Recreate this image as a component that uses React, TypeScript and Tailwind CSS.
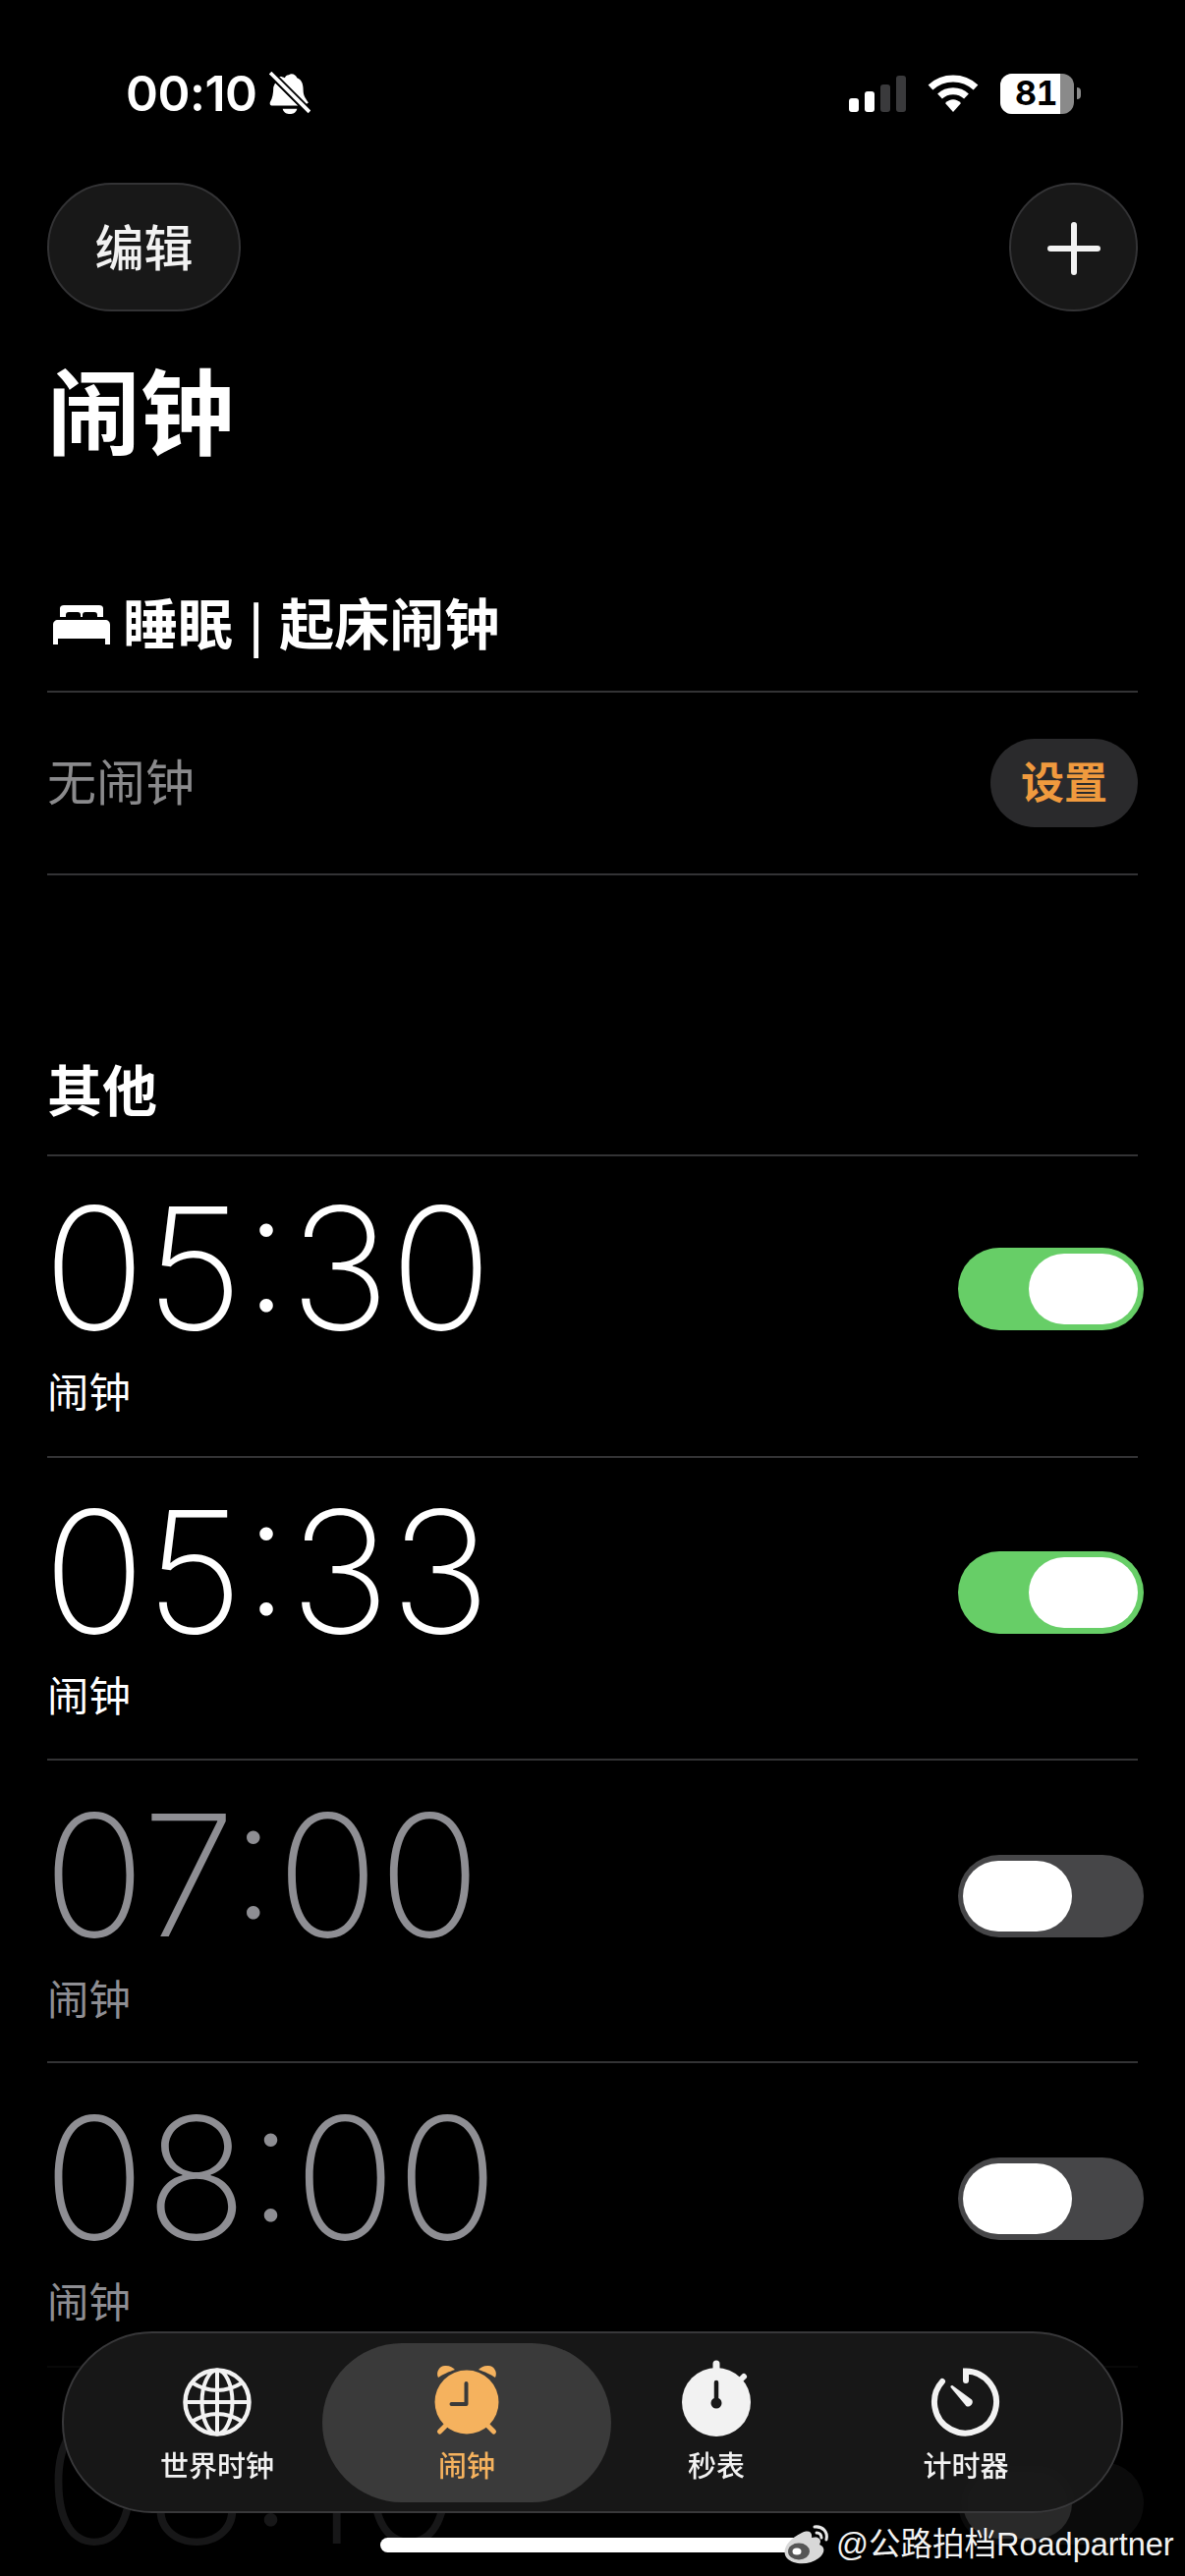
const CJK = "font-['Inter','Noto_Sans_CJK_SC',sans-serif]";

const alarms = [
  { time: "05:30", on: true, size: "h-[307px]", offset: "pt-0" },
  { time: "05:33", on: true, size: "h-[308px]", offset: "pt-[2px]" },
  { time: "07:00", on: false, size: "h-[308px]", offset: "pt-[3px]" },
  { time: "08:00", on: false, size: "h-[310px]", offset: "pt-[3px]" },
];

const Toggle = ({ on }: { on: boolean }) => (
  <div
    className={`mt-[93px] -mr-[6px] flex h-[84px] w-[189px] shrink-0 items-center rounded-full ${
      on ? "justify-end bg-[#67ce67] pr-[6px]" : "justify-start bg-[#464648] pl-[5px]"
    }`}
  >
    <div className="h-[72px] w-[111px] rounded-full bg-white" />
  </div>
);

type RowProps = { time: string; on: boolean; size: string; offset: string; label?: boolean };

const AlarmRow = ({ time, on, size, offset, label = true }: RowProps) => (
  <div className={`flex justify-between border-t-2 border-[#333335] ${size} ${offset}`}>
    <div className={on ? "text-white" : "text-[#8e8e93]"}>
      <div className="mt-[27px] -ml-[4px] text-[172px] leading-[172px] font-[250] tracking-[0px]">{time}</div>
      {label && <div className="mt-[17px] text-[42.5px] leading-[50px]">闹钟</div>}
    </div>
    <Toggle on={on} />
  </div>
);

const SignalIcon = () => (
  <svg width="58" height="37" viewBox="0 0 58 37">
    <rect x="0" y="23" width="10" height="14" rx="3" fill="#fff" />
    <rect x="16" y="16" width="10" height="21" rx="3" fill="#fff" />
    <rect x="32" y="9" width="10" height="28" rx="3" fill="#3a3a3c" />
    <rect x="48" y="0" width="10" height="37" rx="3" fill="#3a3a3c" />
  </svg>
);

const WifiIcon = () => (
  <svg width="52" height="38" viewBox="0 0 52 38" fill="none">
    <path d="M3 13C16 1 36 1 49 13" stroke="#fff" strokeWidth="7" />
    <path d="M12.5 22C20 15 32 15 39.5 22" stroke="#fff" strokeWidth="7" />
    <path d="M18 29C23 24 29 24 34 29L26 38Z" fill="#fff" />
  </svg>
);

const Battery = () => (
  <div className="flex items-center gap-[3px]">
    <div className="flex h-[41px] w-[75px] overflow-hidden rounded-[12px] bg-[#8a8a8a]">
      <div className="flex h-full w-[61px] items-center justify-end bg-white pr-[3px]">
        <span className="text-[34px] leading-none font-bold text-black tabular-nums tracking-[-0.5px]">81</span>
      </div>
    </div>
    <div className="h-[12px] w-[4px] rounded-r-full bg-[#8a8a8a]" />
  </div>
);

const MutedBell = () => (
  <svg width="42" height="44" viewBox="0 0 40 42" fill="none">
    <path
      d="M19 3C22 1 26 3 27 6C32 8 33 13 33 18C33 24 36 27 38 30L34 33L7 6C10 4 13 5 15 6C16 4 17 3 19 3Z"
      fill="#fff"
    />
    <path d="M4 15C5 13 5 12 6 11L28 33H3C1 33 0 31 1 29C3 26 4 21 4 15Z" fill="#fff" />
    <path d="M13 36H27C26 40 23 41 20 41C17 41 14 40 13 36Z" fill="#fff" />
    <path d="M1 1L39 39" stroke="#000" strokeWidth="7" />
    <path d="M1 1L39 39" stroke="#fff" strokeWidth="3.5" />
  </svg>
);

const BedIcon = () => (
  <svg width="60" height="42" viewBox="0 0 60 42" fill="#fff">
    <path d="M8 4C8 2 10 1 12 1H48C50 1 52 2 52 4V13H46V11C46 9 45 8 43 8H34C32 8 31 9 31 11V13H29V11C29 9 28 8 26 8H17C15 8 14 9 14 11V13H8Z" />
    <path d="M6 16H54C57 16 59 18 59 21V41H54V35H6V41H1V21C1 18 3 16 6 16Z" />
  </svg>
);

const GlobeIcon = () => (
  <svg width="80" height="80" viewBox="0 0 80 80" fill="none" stroke="#f2f2f2" strokeWidth="4">
    <circle cx="40" cy="43" r="32.5" strokeWidth="4.5" />
    <ellipse cx="40" cy="43" rx="15.5" ry="32.5" />
    <path d="M40 10V76M7 43H73M14 23Q40 39 66 23M14 63Q40 47 66 63" />
  </svg>
);

const AlarmIcon = () => (
  <svg width="80" height="80" viewBox="0 0 80 80" fill="none">
    <circle cx="40" cy="43" r="32.5" fill="#f5b25e" />
    <path d="M11 18C8 12 13 5 19 6C23 6 26 8 28 10C22 12 15 15 11 18Z" fill="#f5b25e" />
    <path d="M69 18C72 12 67 5 61 6C57 6 54 8 52 10C58 12 65 15 69 18Z" fill="#f5b25e" />
    <path d="M12.5 73L19.5 66M67.5 73L60.5 66" stroke="#f5b25e" strokeWidth="5" strokeLinecap="round" />
    <path d="M39.5 24V45H24.5" stroke="#3a3a3a" strokeWidth="4" strokeLinecap="round" strokeLinejoin="round" />
  </svg>
);

const StopwatchIcon = () => (
  <svg width="80" height="80" viewBox="0 0 80 80" fill="none">
    <circle cx="40" cy="43" r="35" fill="#f2f2f2" />
    <path d="M40 4V12" stroke="#f2f2f2" strokeWidth="7" strokeLinecap="round" />
    <path d="M68 17L62 23" stroke="#f2f2f2" strokeWidth="6" strokeLinecap="round" />
    <path d="M40 23V43" stroke="#181818" strokeWidth="4.5" strokeLinecap="round" />
    <circle cx="40" cy="44" r="5.5" fill="#181818" />
  </svg>
);

const TimerIcon = () => (
  <svg width="80" height="80" viewBox="0 0 80 80" fill="none">
    <path d="M40 21V11.5A31.5 31.5 0 1 1 16 22" stroke="#f2f2f2" strokeWidth="6" strokeLinecap="round" />
    <path d="M24.5 28C24 26.5 25.5 25.5 27 26.5L46 40.5C48 43 46 47 42.5 47.5C41 47.5 40 47 39.5 46Z" fill="#f2f2f2" />
  </svg>
);

const WeiboIcon = () => (
  <svg width="52" height="42" viewBox="0 0 52 42" fill="none">
    <path
      d="M20 9C27 6 31 8 30 14C37 12 41 16 38 21C44 23 44 30 37 35C28 42 12 42 5 35C-1 28 4 17 20 9Z"
      fill="#d8d8d8"
    />
    <ellipse cx="17" cy="28" rx="11" ry="8.5" fill="#555" />
    <ellipse cx="15" cy="28" rx="4.5" ry="3.5" fill="#fff" />
    <path d="M33 3C41 2 47 8 45 16" stroke="#e8e8e8" strokeWidth="3" strokeLinecap="round" />
    <path d="M35 9C38 9 40 11 40 14" stroke="#e8e8e8" strokeWidth="3" strokeLinecap="round" />
  </svg>
);

const tabs = [
  { label: "世界时钟", icon: <GlobeIcon /> },
  { label: "闹钟", icon: <AlarmIcon />, active: true },
  { label: "秒表", icon: <StopwatchIcon /> },
  { label: "计时器", icon: <TimerIcon /> },
];

const TabBar = () => (
  <div className="absolute top-[2373px] left-[63px] flex h-[185px] w-[1080px] items-center rounded-[92px] border-2 border-[#38383a] bg-[#181818]/95 pl-[29px] backdrop-blur-[4px]">
    {tabs.map((tab) => (
      <div
        key={tab.label}
        className={`flex h-[162px] flex-col items-center pt-[17px] ${
          tab.active ? "-mx-[20px] w-[294px] rounded-[81px] bg-[#3a3a3a]" : "w-[254px]"
        }`}
      >
        {tab.icon}
        <span
          className={`mt-[11px] text-[29px] leading-[36px] font-medium ${tab.active ? "text-[#f5b25e]" : "text-[#f2f2f2]"}`}
        >
          {tab.label}
        </span>
      </div>
    ))}
  </div>
);

export default function App() {
  return (
    <div className={`relative h-[2622px] w-[1206px] overflow-hidden bg-black text-white ${CJK}`}>
      {/* status bar */}
      <div className="flex h-[186px] items-start justify-between pt-[70px] pr-[106px] pl-[128px]">
        <div className="flex h-[50px] items-center gap-[12px]">
          <span className="text-[50px] leading-[50px] font-semibold tracking-[-0.5px]">00:10</span>
          <MutedBell />
        </div>
        <div className="flex h-[50px] items-center">
          <SignalIcon />
          <div className="mx-[22px]"><WifiIcon /></div>
          <Battery />
        </div>
      </div>

      <div className="px-[48px]">
        <div className="flex h-[131px] items-center justify-between">
          <div className="flex h-[131px] w-[197px] items-center justify-center rounded-full border-2 border-[#333335] bg-[#181818] pt-[3px] text-[50px] font-medium text-[#f2f2f2]">
            编辑
          </div>
          <div className="flex h-[131px] w-[131px] items-center justify-center rounded-full border-2 border-[#333335] bg-[#181818] pt-[2px]">
            <svg width="54" height="54" viewBox="0 0 54 54" stroke="#f2f2f2" strokeWidth="6" strokeLinecap="round">
              <path d="M27 3V51M3 27H51" />
            </svg>
          </div>
        </div>

        <h1 className="mt-[40px] h-[130px] text-[95px] leading-[130px] font-bold">闹钟</h1>

        <div className="mt-[109px] flex h-[80px] items-center gap-[12px] pl-[5px] text-[56px] font-bold">
          <BedIcon />
          <span>
            睡眠 <span className="px-[3px] font-['Noto_Sans_CJK_SC'] text-[50px] font-bold">|</span> 起床闹钟
          </span>
        </div>

        <div className="mt-[27px] flex h-[188px] items-center justify-between border-y-2 border-[#333335]">
          <span className="text-[50px] text-[#8a8a8c]">无闹钟</span>
          <div className="flex h-[90px] w-[150px] items-center justify-center rounded-full bg-[#2a2a2c] text-[44px] font-bold text-[#f09a3e]">
            设置
          </div>
        </div>

        <div className="mt-[180px] mb-[24px] flex h-[80px] items-center text-[56px] font-bold">其他</div>

        {alarms.map((alarm) => (
          <AlarmRow key={alarm.time} {...alarm} />
        ))}

        {/* row that has scrolled under the tab bar */}
        <div className="opacity-[.16]">
          <AlarmRow time="08:10" on={false} size="h-[220px]" offset="pt-[3px]" label={false} />
        </div>
      </div>

      <TabBar />

      <div className="absolute top-[2583px] left-[387px] h-[15px] w-[440px] rounded-full bg-white" />

      {/* watermark */}
      <div className="absolute top-[2568px] left-[796px] flex h-[44px] items-center gap-[3px] whitespace-nowrap font-['Liberation_Sans','Noto_Sans_CJK_SC',sans-serif] text-[32.5px] leading-[44px] text-[#f2f2f2]">
        <WeiboIcon />
        <span>@公路拍档Roadpartner</span>
      </div>
    </div>
  );
}
